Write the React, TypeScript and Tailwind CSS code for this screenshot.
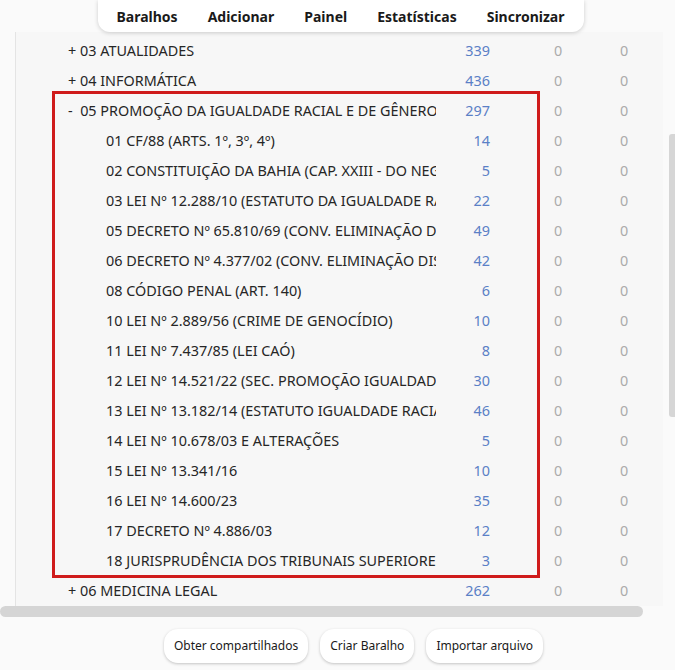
const font = { fontFamily: '"Noto Sans", "Open Sans", Arial, sans-serif' }

type Deck = { name: string; count: number }

const children: Deck[] = [
  { name: '01 CF/88 (ARTS. 1º, 3º, 4º)', count: 14 },
  { name: '02 CONSTITUIÇÃO DA BAHIA (CAP. XXIII - DO NEGRO)', count: 5 },
  { name: '03 LEI Nº 12.288/10 (ESTATUTO DA IGUALDADE RACIAL)', count: 22 },
  { name: '05 DECRETO Nº 65.810/69 (CONV. ELIMINAÇÃO DISCRIMINAÇÃO RACIAL)', count: 49 },
  { name: '06 DECRETO Nº 4.377/02 (CONV. ELIMINAÇÃO DISCRIMINAÇÃO MULHER)', count: 42 },
  { name: '08 CÓDIGO PENAL (ART. 140)', count: 6 },
  { name: '10 LEI Nº 2.889/56 (CRIME DE GENOCÍDIO)', count: 10 },
  { name: '11 LEI Nº 7.437/85 (LEI CAÓ)', count: 8 },
  { name: '12 LEI Nº 14.521/22 (SEC. PROMOÇÃO IGUALDADE RACIAL)', count: 30 },
  { name: '13 LEI Nº 13.182/14 (ESTATUTO IGUALDADE RACIAL BAHIA)', count: 46 },
  { name: '14 LEI Nº 10.678/03 E ALTERAÇÕES', count: 5 },
  { name: '15 LEI Nº 13.341/16', count: 10 },
  { name: '16 LEI Nº 14.600/23', count: 35 },
  { name: '17 DECRETO Nº 4.886/03', count: 12 },
  { name: '18 JURISPRUDÊNCIA DOS TRIBUNAIS SUPERIORES', count: 3 },
]

function Row({ name, count, prefix, child }: { name: string; count: number; prefix?: string; child?: boolean }) {
  return (
    <div className="flex h-[30px] items-center text-[14.4px]">
      <div
        className={
          child
            ? 'ml-[90px] w-[330px] shrink-0 overflow-hidden whitespace-pre text-[#262626]'
            : 'ml-[52px] w-[368px] shrink-0 overflow-hidden whitespace-pre text-[#262626]'
        }
      >
        {prefix}
        {name}
      </div>
      <div className="w-[54px] text-right text-[#5b80c6]">{count}</div>
      <div className="ml-[35px] w-[66px] text-center text-[#ababab]">0</div>
      <div className="w-[66px] text-center text-[#ababab]">0</div>
    </div>
  )
}

export default function App() {
  const nav = ['Baralhos', 'Adicionar', 'Painel', 'Estatísticas', 'Sincronizar']
  const btn = 'h-[34px] rounded-[14px] bg-white px-[10px] shadow-[0_1px_3px_rgba(0,0,0,0.22)]'
  return (
    <div style={font} className="flex h-[670px] w-[675px] flex-col overflow-hidden bg-[#fafafa]">
      <div className="relative z-10 flex h-[32px] justify-center pl-[6px]">
        <div className="flex h-[32px] items-center gap-[30px] rounded-b-[12px] bg-white px-[19px] text-[14px] font-bold text-[#1a1a1a] shadow-[0_1px_4px_rgba(0,0,0,0.18)]">
          {nav.map((n) => (
            <span key={n}>{n}</span>
          ))}
        </div>
      </div>

      <div className="flex">
        <div className="ml-[15px] w-[648px] border-l border-[#e4e4e4] bg-[#f7f7f7] pt-[4px]">
          <Row prefix="+ " name="03 ATUALIDADES" count={339} />
          <Row prefix="+ " name="04 INFORMÁTICA" count={436} />
          <div className="relative">
            <Row prefix="-  " name="05 PROMOÇÃO DA IGUALDADE RACIAL E DE GÊNERO" count={297} />
            {children.map((c) => (
              <Row key={c.name} name={c.name} count={c.count} child />
            ))}
            <div className="pointer-events-none absolute -top-[5px] bottom-[-2px] left-[36px] w-[488px] border-[3px] border-[#cf1b1b]" />
          </div>
          <Row prefix="+ " name="06 MEDICINA LEGAL" count={262} />
        </div>
        <div className="ml-[6px] w-[6px]">
          <div className="mt-[102px] h-[283px] rounded-l-[3px] bg-[#d6d6d6]" />
        </div>
      </div>

      <div className="h-[11px] w-[643px] rounded-full bg-[#d5d5d5]" />

      <div className="mt-[12px] flex justify-center gap-[12px] pl-[32px] text-[12px] text-[#1a1a1a]">
        <button className={btn}>Obter compartilhados</button>
        <button className={btn}>Criar Baralho</button>
        <button className={btn}>Importar arquivo</button>
      </div>
    </div>
  )
}
